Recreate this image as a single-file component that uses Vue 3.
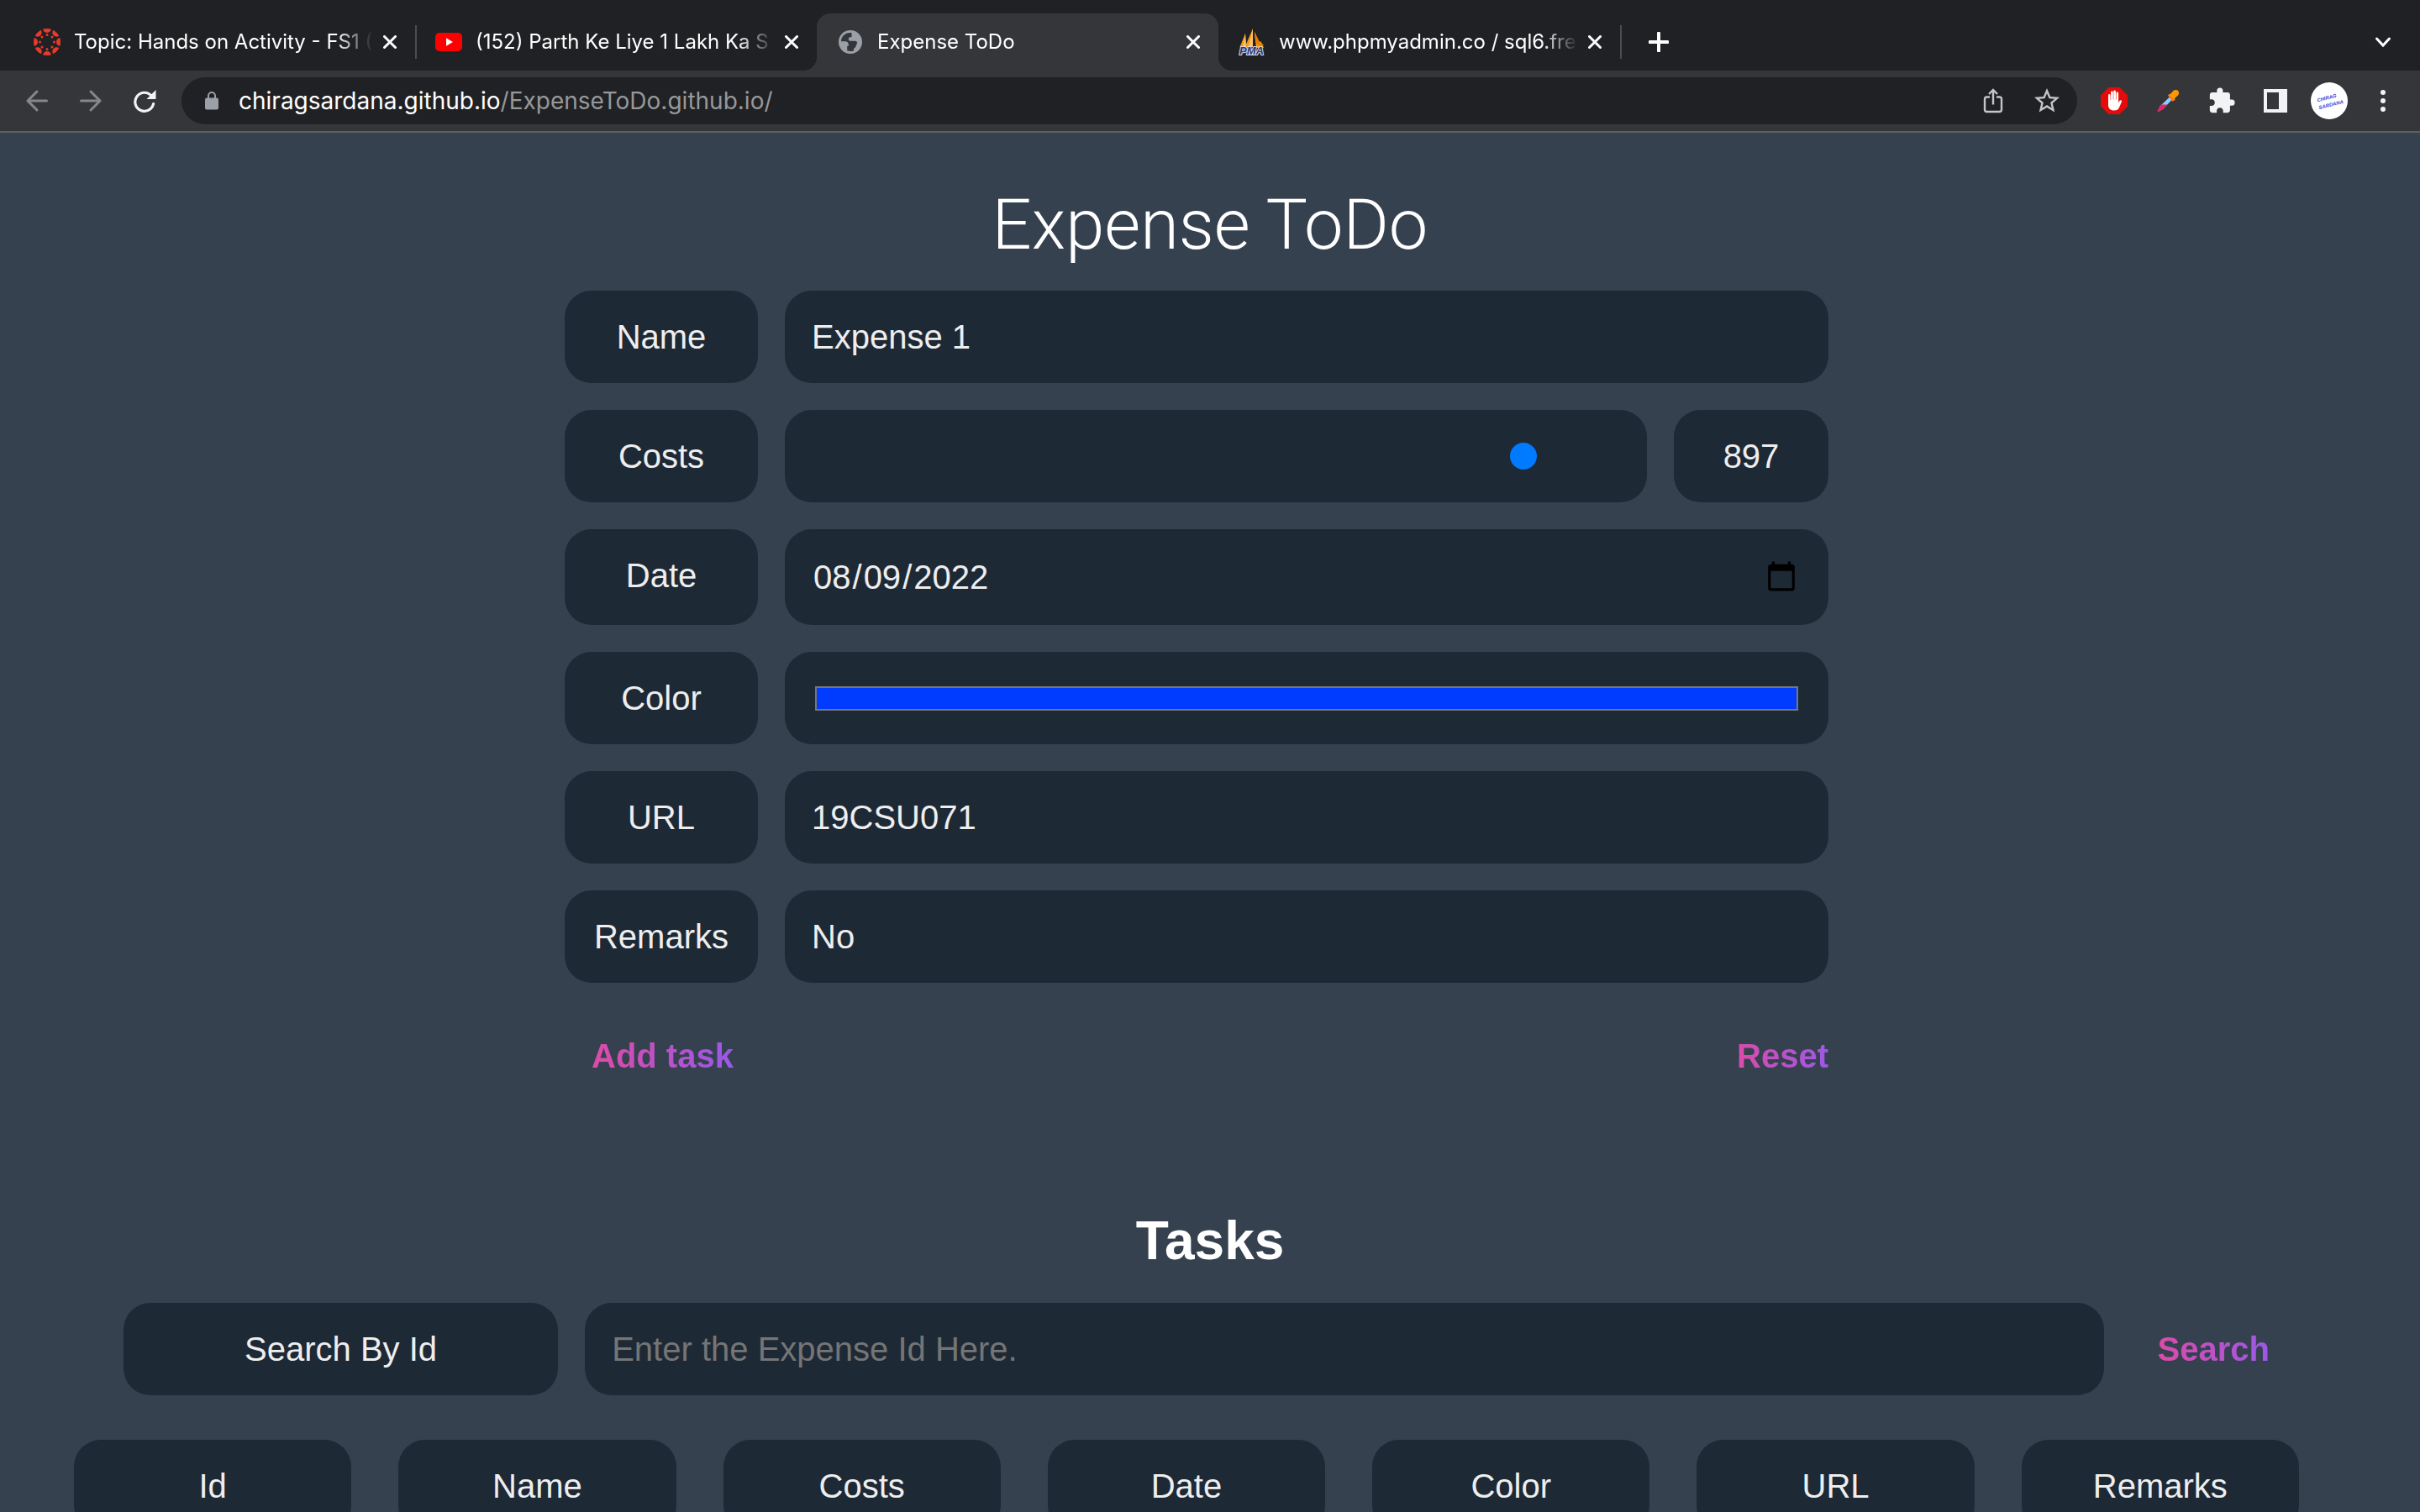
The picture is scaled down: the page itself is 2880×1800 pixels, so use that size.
<script setup>
import { ref } from 'vue'

const tabs = [
  { icon: 'canvas', title: 'Topic: Hands on Activity - FS1 (', separator: true },
  { icon: 'youtube', title: '(152) Parth Ke Liye 1 Lakh Ka S' },
  { icon: 'globe', title: 'Expense ToDo', active: true },
  { icon: 'pma', title: 'www.phpmyadmin.co / sql6.fre', separator: true }
]

const petals = [0, 45, 90, 135, 180, 225, 270, 315]
const columns = ['Id', 'Name', 'Costs', 'Date', 'Color', 'URL', 'Remarks']

const name = ref('Expense 1')
const cost = ref(897)
const date = ref('2022-08-09')
const color = ref('#003cff')
const url = ref('19CSU071')
const remarks = ref('No')
const searchId = ref('')

function reset() {
  name.value = ''
  cost.value = 0
  date.value = ''
  url.value = ''
  remarks.value = ''
}
</script>

<template>
  <div class="window">
    <header class="chrome">
      <div class="strip">
        <div v-for="tab in tabs" :key="tab.title" class="tab" :class="{ active: tab.active, separator: tab.separator }">
          <svg v-if="tab.icon === 'canvas'" class="favicon" viewBox="0 0 32 32">
            <defs><clipPath id="disc"><circle cx="16" cy="16" r="16" /></clipPath></defs>
            <g fill="#e8392b">
              <g clip-path="url(#disc)">
                <ellipse v-for="a in petals" :key="a" cx="16" cy="0" rx="5" ry="5" :transform="`rotate(${a} 16 16)`" />
              </g>
              <circle v-for="a in petals" :key="a" cx="16" cy="7.5" r="1.5" :transform="`rotate(${a} 16 16)`" />
            </g>
          </svg>
          <svg v-else-if="tab.icon === 'youtube'" class="favicon" viewBox="0 0 32 32">
            <rect y="5" width="32" height="22" rx="5" fill="#f00" />
            <path d="M13 11.3v9.4l8-4.7z" fill="#fff" />
          </svg>
          <svg v-else-if="tab.icon === 'globe'" class="favicon" viewBox="0 0 32 32">
            <circle cx="16" cy="16" r="14" fill="#9aa0a6" />
            <path d="M17.5 5C10 4 5 9.500 5 15.200h4.500c3 0 4.300 1.300 4.300 4v1.600h-1.600v5.400c2 1 5.800 1 7.800.2v-2.700c2.500-.8 4-2.300 4.400-4.300.7-2.600-.7-4.600-3.200-4.600h-4.400c-2.500 0-3-1.200-3-2.600 0-1.500 1-2 2.300-2h1.400z" fill="#35363a" />
            <path d="M21 24.500h4.500L28 17l-2-4z" fill="#9aa0a6" />
          </svg>
          <svg v-else class="favicon" viewBox="0 0 32 32">
            <path d="M8 6 1.500 22H9zM17 0 7.500 22H17zM19 4l2 19h9l-3-7-3-1z" fill="#f89c0e" />
            <path d="M8 6 5 22h4zM17 0l-5 22h5z" fill="#fbc173" />
            <path d="M19 4 20 16l5 5 6-2-5-1z" fill="#e87b05" />
            <text x="1" y="31" class="pma">PMA</text>
          </svg>
          <span class="tab-title">{{ tab.title }}</span>
          <button class="close" aria-label="Close tab">
            <svg viewBox="0 0 16 16"><path d="m1.500 1.500 13 13m0-13-13 13" /></svg>
          </button>
        </div>
        <button class="tool plus" aria-label="New tab">
          <svg width="24" height="24" viewBox="0 0 24 24"><path d="M12 1.500v21M1.500 12h21" stroke="#fff" stroke-width="4" stroke-linecap="round" /></svg>
        </button>
        <button class="tool last" aria-label="Search tabs">
          <svg width="20" height="14" viewBox="0 0 20 14"><path d="m2.500 3 7.500 8 7.500-8" fill="none" stroke="#fff" stroke-width="3" stroke-linecap="round" /></svg>
        </button>
      </div>

      <div class="toolbar">
        <nav class="tools">
          <button class="tool" aria-label="Back">
            <svg width="28" height="28" viewBox="0 0 28 28"><path d="M14 3 3 14l11 11M3 14h22.500" class="arrow" /></svg>
          </button>
          <button class="tool" aria-label="Forward">
            <svg width="28" height="28" viewBox="0 0 28 28"><path d="m14 3 11 11-11 11m11-11H2.500" class="arrow" /></svg>
          </button>
          <button class="tool" aria-label="Reload">
            <svg width="28" height="28" viewBox="0 0 28 28">
              <path d="M22.500 8.500A11 11 0 1 0 24.600 17.500" fill="none" stroke="#f1f3f4" stroke-width="3.200" stroke-linecap="round" />
              <path d="M27.500 1v11h-11z" fill="#f1f3f4" />
            </svg>
          </button>
        </nav>
        <div class="omnibox">
          <button class="tool" aria-label="Site information">
            <svg width="16" height="22" viewBox="0 0 16 22">
              <rect y="7.500" width="16" height="14" rx="2" fill="#9aa0a6" />
              <path d="M4 8V5a4 4 0 0 1 8 0v3" fill="none" stroke="#9aa0a6" stroke-width="2" />
            </svg>
          </button>
          <span class="address">chiragsardana.github.io<span class="path">/ExpenseToDo.github.io/</span></span>
          <button class="tool" aria-label="Share">
            <svg width="24" height="30" viewBox="0 0 24 30" fill="none" stroke="#c4c5c7" stroke-width="2.400">
              <path d="M8 10.500H4.500A2.500 2.500 0 0 0 2 13v12.500A2.500 2.500 0 0 0 4.500 28h15a2.500 2.500 0 0 0 2.500-2.500V13a2.500 2.500 0 0 0-2.500-2.500H16M12 19.500V2M7 7l5-5 5 5" />
            </svg>
          </button>
          <button class="tool" aria-label="Bookmark">
            <svg width="36" height="36" viewBox="0 0 24 24"><path fill="#c4c5c7" d="m22 9.240-7.190-.62L12 2 9.190 8.630 2 9.240l5.460 4.730L5.820 21 12 17.270 18.180 21l-1.630-7.030zM12 15.400l-3.760 2.270 1-4.280-3.320-2.880 4.380-.38L12 6.100l1.710 4.040 4.380.38-3.320 2.880 1 4.280z" /></svg>
          </button>
        </div>
        <div class="tools">
          <button class="tool" aria-label="Ad blocker">
            <svg width="32" height="32" viewBox="0 0 32 32">
              <path d="M9.500 0h13L32 9.500v13L22.500 32h-13L0 22.500v-13z" fill="#e60b0b" />
              <path d="M9 9.500c0-2 2.600-2 2.600 0V15h.5V6c0-2 2.700-2 2.700 0v8.500h.5V5c0-2 2.700-2 2.700 0v9.500h.5V7c0-2 2.600-2 2.600 0v11.500l1.200-2.300c1-1.600 3.200-.8 2.600 1L22 24c-1 2.400-3 3.500-6 3.500-4.500 0-7-2.500-7-6.500z" fill="#fff" />
            </svg>
          </button>
          <button class="tool" aria-label="Color picker">
            <svg width="28" height="28" viewBox="0 0 28 28">
              <path d="M16.500 9 19.500 12 8 24l-5.500 3L2 26l2.500-5.500z" fill="#90caf9" />
              <path d="M6 18.500h7L8 24l-6 3.500-.8-1z" fill="#e91e63" />
              <path d="m14 7.500 2-2 7 7-3.500 2.500z" fill="#ff7a0f" />
              <path d="M16 7 20 2.500c2-2 4.500-2 6-.5s1.500 4-.5 6L21 12z" fill="#ff9800" />
            </svg>
          </button>
          <button class="tool" aria-label="Extensions">
            <svg width="34" height="34" viewBox="0 0 24 24"><path fill="#f1f3f4" d="M20.500 11H19V7c0-1.100-.9-2-2-2h-4V3.500a2.500 2.500 0 0 0-5 0V5H4c-1.100 0-1.990.9-1.990 2v3.800H3.500c1.490 0 2.700 1.210 2.700 2.700s-1.210 2.700-2.700 2.700H2V20c0 1.100.9 2 2 2h3.800v-1.500c0-1.490 1.210-2.700 2.700-2.700s2.700 1.210 2.700 2.700V22H17c1.100 0 2-.9 2-2v-4h1.500a2.500 2.500 0 0 0 0-5" /></svg>
          </button>
          <button class="tool" aria-label="Side panel">
            <svg width="28" height="28" viewBox="0 0 28 28"><path fill="#f1f3f4" fill-rule="evenodd" d="M0 0h28v28H0zM4 4v20h14V4z" /></svg>
          </button>
          <button class="tool" aria-label="Profile">
            <svg width="44" height="44" viewBox="0 0 44 44">
              <circle cx="22" cy="22" r="22" fill="#fff" />
              <g transform="rotate(-14 22 22)" class="signature">
                <text x="8" y="20">CHIRAG</text>
                <text x="8" y="29">SARDANA</text>
              </g>
            </svg>
          </button>
          <button class="tool" aria-label="Menu">
            <svg width="6" height="28" viewBox="0 0 6 28" fill="#f1f3f4"><circle cx="3" cy="4" r="3" /><circle cx="3" cy="14" r="3" /><circle cx="3" cy="24" r="3" /></svg>
          </button>
        </div>
      </div>
    </header>

    <main class="page">
      <h1>Expense ToDo</h1>

      <form class="expense" @submit.prevent>
        <div class="row">
          <label class="box label" for="name">Name</label>
          <input id="name" v-model="name" class="box field" type="text">
        </div>
        <div class="row">
          <label class="box label" for="cost">Costs</label>
          <div class="box field inset"><input id="cost" v-model="cost" class="slider" type="range" min="0" max="1000"></div>
          <output class="box amount" for="cost">{{ cost }}</output>
        </div>
        <div class="row">
          <label class="box label" for="date">Date</label>
          <input id="date" v-model="date" class="box field date" type="date">
        </div>
        <div class="row">
          <label class="box label" for="color">Color</label>
          <div class="box field inset"><input id="color" v-model="color" class="swatch" type="color"></div>
        </div>
        <div class="row">
          <label class="box label" for="url">URL</label>
          <input id="url" v-model="url" class="box field" type="text">
        </div>
        <div class="row">
          <label class="box label" for="remarks">Remarks</label>
          <input id="remarks" v-model="remarks" class="box field" type="text">
        </div>
        <div class="actions">
          <button class="action" type="submit">Add task</button>
          <button class="action" type="button" @click="reset">Reset</button>
        </div>
      </form>

      <h2>Tasks</h2>

      <form class="search" @submit.prevent>
        <label class="box search-label" for="search">Search By Id</label>
        <input id="search" v-model="searchId" class="box search-field" type="text" placeholder="Enter the Expense Id Here.">
        <button class="action" type="submit">Search</button>
      </form>

      <table class="tasks">
        <thead>
          <tr><th v-for="column in columns" :key="column" class="box" scope="col">{{ column }}</th></tr>
        </thead>
      </table>
    </main>
  </div>
</template>

<style>
body {
  margin: 0;
  background: #364150;
}
</style>

<style scoped>
.window {
  display: flex;
  flex-direction: column;
  height: 100vh;
  overflow: hidden;
  background: #364150;
  font-family: "Liberation Sans", Arial, sans-serif;
}

button {
  margin: 0;
  padding: 0;
  border: 0;
  background: none;
  font: inherit;
}

/* Browser chrome */
.chrome {
  flex: none;
  border-bottom: 2px solid #5f6063;
  background: #35363a;
  font-family: Inter, sans-serif;
}

.strip {
  display: flex;
  align-items: flex-end;
  height: 84px;
  padding: 0 12px 0 16px;
  box-sizing: border-box;
  background: #202124;
}

.tab {
  position: relative;
  display: flex;
  align-items: center;
  width: 478px;
  height: 68px;
  padding: 0 22px 0 24px;
  box-sizing: border-box;
}

.tab.active {
  border-radius: 16px 16px 0 0;
  background: #35363a;
}

.tab.active::before,
.tab.active::after {
  content: "";
  position: absolute;
  bottom: 0;
  width: 16px;
  height: 16px;
}

.tab.active::before {
  right: 100%;
  background: radial-gradient(circle at 0 0, transparent 16px, #35363a 16px);
}

.tab.active::after {
  left: 100%;
  background: radial-gradient(circle at 100% 0, transparent 16px, #35363a 16px);
}

.tab.separator::after {
  content: "";
  position: absolute;
  right: -2px;
  width: 2px;
  height: 40px;
  background: #4c4d51;
}

.favicon {
  flex: none;
  width: 32px;
  height: 32px;
  margin-right: 16px;
}

.pma {
  fill: #2f3670;
  stroke: #dcdde8;
  stroke-width: 2px;
  paint-order: stroke;
  font: italic 700 13px "Liberation Sans", sans-serif;
}

.tab-title {
  flex: 1;
  margin-right: 12px;
  color: #fff;
  font-size: 24px;
  line-height: 32px;
  white-space: nowrap;
  mask-image: linear-gradient(to left, transparent, #000 44px);
}

.close {
  display: flex;
  width: 16px;
  height: 16px;
}

.close path {
  stroke: #fff;
  stroke-width: 3;
  stroke-linecap: round;
}

.tool {
  display: flex;
  flex: none;
  align-items: center;
  justify-content: center;
  width: 64px;
  height: 56px;
}

.plus,
.last {
  height: 68px;
}

.plus {
  margin-left: 14px;
}

.last {
  margin-left: auto;
}

.toolbar {
  display: flex;
  align-items: center;
  gap: 12px;
  height: 72px;
  padding: 0 12px;
}

.tools {
  display: flex;
}

.arrow {
  fill: none;
  stroke: #85868a;
  stroke-width: 3;
  stroke-linecap: round;
}

.omnibox {
  display: flex;
  flex: 1;
  align-items: center;
  height: 56px;
  padding: 0 4px;
  border-radius: 28px;
  background: #202124;
}

.address {
  flex: 1;
  color: #fff;
  font-size: 28px;
  line-height: 36px;
}

.path {
  color: #97989a;
}

.signature {
  fill: #3c46dc;
  font: italic 700 6px "Liberation Sans", sans-serif;
}

/* Page */
.page {
  flex: 1;
  min-height: 0;
  padding-top: 60px;
  box-sizing: border-box;
  overflow: hidden;
  color: #eee;
  font-size: 40px;
  line-height: 46px;
}

h1 {
  margin: 0 0 28px;
  color: #fff;
  font: 300 83px/100px Roboto, sans-serif;
  text-align: center;
}

h2 {
  margin: 128px 0 37px;
  color: #fff;
  font-size: 64px;
  font-weight: 700;
  line-height: 74px;
  text-align: center;
}

.box {
  min-width: 0;
  margin: 0;
  padding: 32px;
  border: 0;
  border-radius: 32px;
  box-sizing: border-box;
  background: #1e2936;
  color: #eee;
  font: 400 40px/46px "Liberation Sans", Arial, sans-serif;
}

.expense {
  display: flex;
  flex-direction: column;
  gap: 32px;
  max-width: 1536px;
  margin: 0 auto;
}

.row {
  display: flex;
  gap: 32px;
  margin-right: 32px;
}

.label {
  flex: none;
  width: 230px;
  text-align: center;
}

input.box {
  height: 110px;
  outline: none;
}

.field {
  flex: 1;
}

.inset {
  display: flex;
  align-items: center;
  padding: 32px 36px;
}

.amount {
  flex: none;
  width: 184px;
  text-align: center;
}

.slider {
  width: 100%;
  height: 32px;
  margin: 0;
  appearance: none;
  background: transparent;
}

.slider::-webkit-slider-thumb {
  width: 32px;
  height: 32px;
  border-radius: 50%;
  appearance: none;
  background: #007aff;
}

input.date {
  height: 114px;
}

.date::-webkit-datetime-edit-month-field,
.date::-webkit-datetime-edit-day-field,
.date::-webkit-datetime-edit-year-field {
  padding: 0 2px;
}

.date::-webkit-calendar-picker-indicator {
  width: 40px;
  height: 40px;
  margin-right: 4px;
  padding: 0;
}

.swatch {
  width: 100%;
  height: 29px;
  padding: 0;
  border: 2px solid #777;
  appearance: none;
  background: none;
}

.swatch::-webkit-color-swatch-wrapper {
  padding: 0;
}

.swatch::-webkit-color-swatch {
  border: 0;
}

.actions {
  display: flex;
  justify-content: space-between;
}

.action {
  padding: 32px;
  background: linear-gradient(to right, #ec4899, #8b5cf6);
  background-clip: text;
  color: transparent;
  font-size: 40px;
  font-weight: 700;
  line-height: 46px;
}

.search {
  display: flex;
  padding: 0 147px;
}

.search-label {
  flex: none;
  width: 20%;
  margin-right: 32px;
  text-align: center;
}

.search-field {
  flex: 1;
  margin-right: 32px;
}

.search-field::placeholder {
  color: #757575;
  opacity: 1;
}

.tasks {
  width: calc(100% - 120px);
  margin: 53px 0 0 32px;
  border-spacing: 56px 0;
  table-layout: fixed;
}
</style>
